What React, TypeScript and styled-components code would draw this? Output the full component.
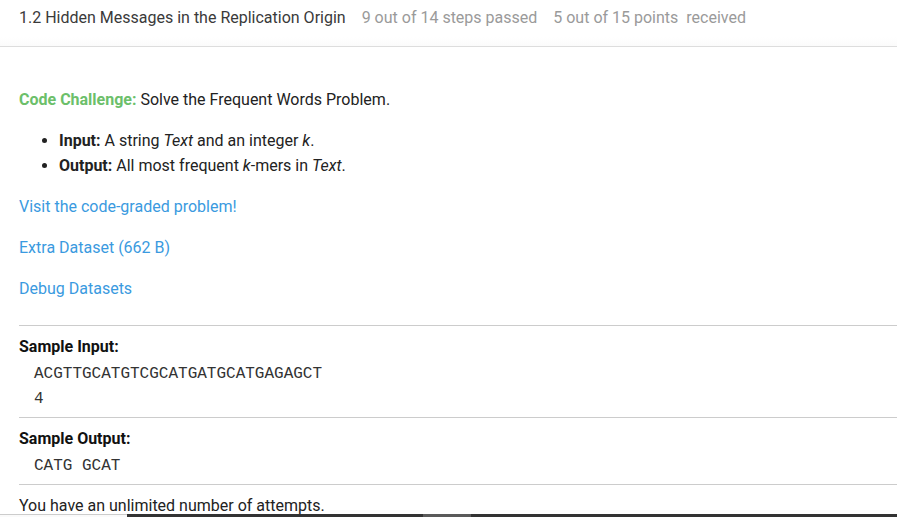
import React from "react";
import styled, { createGlobalStyle } from "styled-components";

const Global = createGlobalStyle`
  html, body { margin: 0; padding: 0; background: #fff; }
  body { font-family: Roboto, "Liberation Sans", Arial, sans-serif; font-size: 16px; color: #222; overflow: hidden; }
  * { box-sizing: border-box; }
`;

const Page = styled.div`
  width: 897px;
  height: 517px;
  overflow: hidden;
  position: relative;
`;

const Header = styled.header`
  display: flex;
  align-items: center;
  gap: 16px;
  height: 47px;
  padding: 7px 19px 17px;
  line-height: 22px;
  border-bottom: 1px solid #ddd;
  background: linear-gradient(#fff 80%, #fbfbfb);
`;

const Title = styled.span`
  color: #3a3a3a;
`;

const Stat = styled.span`
  color: #9a9a9a;
  white-space: pre;
`;

const Content = styled.main`
  padding: 40px 0 0 19px;
  line-height: 25px;
`;

const P = styled.p`
  margin: 0 0 16px;
`;

const Green = styled.b`
  color: #6cbf6a;
  font-weight: 700;
`;

const List = styled.ul`
  margin: 0 0 16px;
  padding-left: 40px;
`;

const Item = styled.li``;

const Link = styled.a<{ $mb?: number }>`
  color: #3a9ae0;
  text-decoration: none;
  display: block;
  margin: 0 0 ${(p) => p.$mb ?? 16}px;
`;

const Section = styled.section`
  border-top: 1px solid #ccc;
  padding: 8px 0 5px;
`;

const Label = styled.div`
  font-weight: 700;
  color: #111;
`;

const Code = styled.pre`
  margin: 3px 0 0 15px;
  font-family: "Liberation Mono", "DejaVu Sans Mono", monospace;
  font-size: 16px;
  line-height: 25px;
  color: #333;
`;

const Note = styled.div`
  border-top: 1px solid #ccc;
  padding-top: 8px;
`;

const BottomBar = styled.div`
  position: absolute;
  left: 0;
  right: 0;
  bottom: 0;
  height: 3px;
  display: flex;
`;

const BarLeft = styled.div`
  width: 127px;
  border-top: 1px solid #ccc;
  background: #fafafa;
`;

const BarTrack = styled.div`
  flex: 1;
  background: #333;
  display: flex;
`;

const BarThumb = styled.div`
  margin-left: 296px;
  width: 48px;
  background: #5a5a5a;
`;

export default function App() {
  return (
    <Page>
      <Global />
      <Header>
        <Title>1.2 Hidden Messages in the Replication Origin</Title>
        <Stat>9 out of 14 steps passed</Stat>
        <Stat>5 out of 15 points  received</Stat>
      </Header>
      <Content>
        <P>
          <Green>Code Challenge:</Green> Solve the Frequent Words Problem.
        </P>
        <List>
          <Item>
            <b>Input:</b> A string <i>Text</i> and an integer <i>k</i>.
          </Item>
          <Item>
            <b>Output:</b> All most frequent <i>k</i>-mers in <i>Text</i>.
          </Item>
        </List>
        <Link href="#">Visit the code-graded problem!</Link>
        <Link href="#">Extra Dataset (662 B)</Link>
        <Link href="#" $mb={24}>Debug Datasets</Link>
        <Section>
          <Label>Sample Input:</Label>
          <Code>{"ACGTTGCATGTCGCATGATGCATGAGAGCT\n4"}</Code>
        </Section>
        <Section>
          <Label>Sample Output:</Label>
          <Code>CATG GCAT</Code>
        </Section>
        <Note>You have an unlimited number of attempts.</Note>
      </Content>
      <BottomBar>
        <BarLeft />
        <BarTrack>
          <BarThumb />
        </BarTrack>
      </BottomBar>
    </Page>
  );
}
